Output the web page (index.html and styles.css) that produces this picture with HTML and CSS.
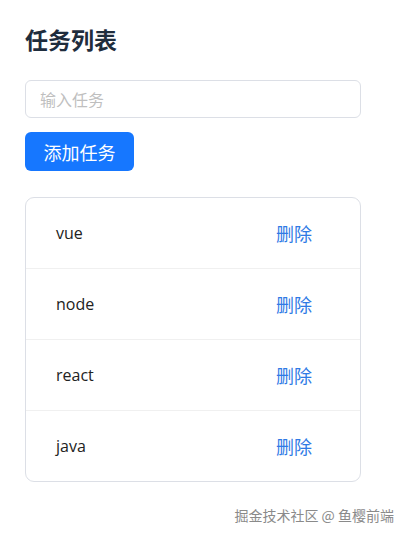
FILE: index.html
```html
<!DOCTYPE html>
<html lang="zh">
<head>
<meta charset="utf-8">
<link rel="stylesheet" href="styles.css">
</head>
<body>
<div class="app">
  <h2 class="title">任务列表</h2>
  <input class="task-input" type="text" placeholder="输入任务">
  <button class="add-btn">添加任务</button>
  <ul class="task-list">
    <li class="task-item"><span class="task-name">vue</span><button class="del-btn">删除</button></li>
    <li class="task-item"><span class="task-name">node</span><button class="del-btn">删除</button></li>
    <li class="task-item"><span class="task-name">react</span><button class="del-btn">删除</button></li>
    <li class="task-item"><span class="task-name">java</span><button class="del-btn">删除</button></li>
  </ul>
</div>
<div class="watermark">掘金技术社区 @ 鱼樱前端</div>
</body>
</html>
```
FILE: styles.css
```css
* { box-sizing: border-box; }
html, body { margin: 0; padding: 0; background: #fff; }
body {
  font-family: "Open Sans", "Noto Sans CJK SC", sans-serif;
  width: 408px;
  height: 538px;
  position: relative;
  overflow: hidden;
}
.app {
  padding: 24px 47px 0 25px;
  display: flex;
  flex-direction: column;
  align-items: flex-start;
}
.title {
  margin: 0;
  font-family: "Noto Sans CJK SC", sans-serif;
  font-size: 23px;
  font-weight: 700;
  line-height: 31px;
  color: #1f2d3d;
}
.task-input {
  margin-top: 25px;
  width: 336px;
  height: 38px;
  border: 1px solid #dcdfe6;
  border-radius: 6px;
  padding: 0 14px;
  font-family: "Noto Sans CJK SC", sans-serif;
  font-size: 16px;
  color: #333;
  outline: none;
}
.task-input::placeholder { color: #bfbfbf; }
.add-btn {
  margin-top: 14px;
  width: 109px;
  height: 39px;
  border: none;
  border-radius: 6px;
  background: #1677ff;
  color: #fff;
  font-family: "Noto Sans CJK SC", sans-serif;
  font-size: 18px;
  padding: 0;
}
.task-list {
  list-style: none;
  margin: 26px 0 0;
  padding: 0;
  width: 336px;
  border: 1px solid #dcdfe6;
  border-radius: 9px;
}
.task-item {
  height: 71px;
  display: flex;
  align-items: center;
  justify-content: space-between;
  padding: 0 48px 0 30px;
  border-bottom: 1px solid #f0f0f0;
}
.task-item:last-child { border-bottom: none; height: 70px; }
.task-name {
  font-size: 16px;
  color: #222;
}
.del-btn {
  border: none;
  background: none;
  padding: 0;
  font-family: "Noto Sans CJK SC", sans-serif;
  font-size: 18px;
  color: #2f7ae5;
}
.watermark {
  position: absolute;
  right: 14px;
  top: 505px;
  font-family: "Noto Sans CJK SC", sans-serif;
  font-size: 14px;
  color: #8a8a8a;
  text-shadow: 0 0 1px #fff;
}
```
